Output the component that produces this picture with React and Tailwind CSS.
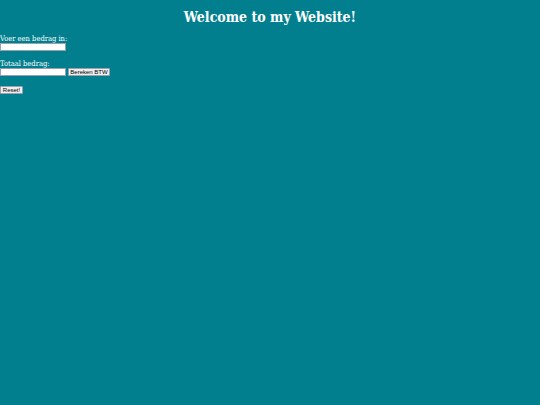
export default function App() {
  return (
    <div className="min-h-[405px] w-full bg-[#017f8e] text-white [font-family:'DejaVu_Serif',serif] [font-stretch:semi-condensed]">
      <h1 className="pt-[7px] text-center text-[14px] font-bold leading-[20px]">
        Welcome to my Website!
      </h1>
      <div className="mt-[7px] text-[7.5px] leading-[9px]">
        <label className="block">Voer een bedrag in:</label>
        <input type="text" className="block h-[8px] w-[66px] border border-gray-400 bg-white" />
        <div className="h-[8px]" />
        <label className="block">Totaal bedrag:</label>
        <div className="flex items-center gap-[2px]">
          <input type="text" className="block h-[8px] w-[66px] border border-gray-400 bg-white" />
          <button className="h-[8px] w-[42px] rounded-[1px] border border-gray-400 bg-[#efefef] text-[6px] leading-[6px] text-black [font-family:'Liberation_Sans',sans-serif] [font-stretch:normal]">
            Bereken BTW
          </button>
        </div>
        <div className="h-[9px]" />
        <button className="h-[8px] w-[23px] rounded-[1px] border border-gray-400 bg-[#efefef] text-[6px] leading-[6px] text-black [font-family:'Liberation_Sans',sans-serif] [font-stretch:normal]">
          Reset!
        </button>
      </div>
    </div>
  );
}
